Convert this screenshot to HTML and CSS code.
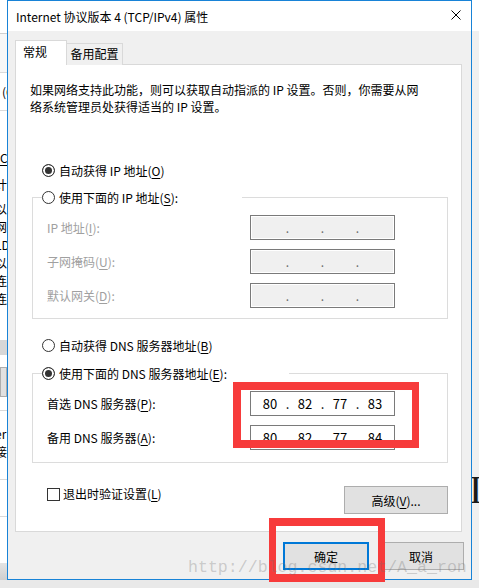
FILE: index.html
```html
<!DOCTYPE html>
<html lang="zh-CN">
<head>
  <meta charset="UTF-8">
  <title>Internet 协议版本 4 (TCP/IPv4) 属性</title>
  <link rel="stylesheet" href="styles.css">
</head>
<body>
  <div class="screen">
    <div class="desktop">
      <!-- window behind, left edge -->
      <div class="behind-left">
        <div class="bl-top"></div>
        <div class="bl-band"></div>
        <div class="bl-cell">(C</div>
        <div class="bl-list">
          <div class="bl-line"><u>C</u></div>
          <div class="bl-line bl-gap">计</div>
          <div class="bl-lines">
            <div>以</div><div>网</div><div>LD</div><div>以</div><div>连</div><div>连</div>
          </div>
        </div>
        <div class="bl-btn"></div>
        <div class="bl-btn2"></div>
        <div class="bl-rows">
          <div>er</div>
          <div>接</div>
        </div>
        <div class="bl-row"></div>
        <div class="bl-fill"></div>
        <div class="bl-shadow"></div>
      </div>

      <div class="dialog">
        <div class="titlebar">
          <span class="title">Internet 协议版本 4 (TCP/IPv4) 属性</span>
          <svg class="close" viewBox="0 0 10 10" width="10" height="10">
            <path d="M0.5 0.5 L9.5 9.5 M9.5 0.5 L0.5 9.5" stroke="#000" stroke-width="1" fill="none"/>
          </svg>
        </div>

        <div class="dialog-body">
          <div class="tabs">
            <div class="tab active">常规</div>
            <div class="tab">备用配置</div>
          </div>

          <div class="panel">
            <p class="desc">如果网络支持此功能，则可以获取自动指派的 IP 设置。否则，你需要从网<br>络系统管理员处获得适当的 IP 设置。</p>

            <label class="radio-row top-radio"><span class="radio checked"></span>自动获得 IP 地址(<u>O</u>)</label>

            <fieldset class="group ip-group">
              <legend class="legend-ip">
                <label class="radio-row"><span class="radio"></span>使用下面的 IP 地址(<u>S</u>):</label>
              </legend>
              <div class="field-row disabled">
                <span class="field-label">IP 地址(<u>I</u>):</span>
                <div class="ip-box">
                  <span class="octet"></span><span class="dot">.</span><span class="octet"></span><span class="dot">.</span><span class="octet"></span><span class="dot">.</span><span class="octet"></span>
                </div>
              </div>
              <div class="field-row disabled">
                <span class="field-label">子网掩码(<u>U</u>):</span>
                <div class="ip-box">
                  <span class="octet"></span><span class="dot">.</span><span class="octet"></span><span class="dot">.</span><span class="octet"></span><span class="dot">.</span><span class="octet"></span>
                </div>
              </div>
              <div class="field-row disabled">
                <span class="field-label">默认网关(<u>D</u>):</span>
                <div class="ip-box">
                  <span class="octet"></span><span class="dot">.</span><span class="octet"></span><span class="dot">.</span><span class="octet"></span><span class="dot">.</span><span class="octet"></span>
                </div>
              </div>
            </fieldset>

            <label class="radio-row dns-radio"><span class="radio"></span>自动获得 DNS 服务器地址(<u>B</u>)</label>

            <fieldset class="group dns-group">
              <legend class="legend-dns">
                <label class="radio-row"><span class="radio checked"></span>使用下面的 DNS 服务器地址(<u>E</u>):</label>
              </legend>
              <div class="field-row">
                <span class="field-label">首选 DNS 服务器(<u>P</u>):</span>
                <div class="ip-box">
                  <span class="octet">80</span><span class="dot">.</span><span class="octet">82</span><span class="dot">.</span><span class="octet">77</span><span class="dot">.</span><span class="octet">83</span>
                </div>
              </div>
              <div class="field-row">
                <span class="field-label">备用 DNS 服务器(<u>A</u>):</span>
                <div class="ip-box">
                  <span class="octet">80</span><span class="dot">.</span><span class="octet">82</span><span class="dot">.</span><span class="octet">77</span><span class="dot">.</span><span class="octet">84</span>
                </div>
              </div>
            </fieldset>

            <div class="panel-bottom">
              <label class="check-row"><span class="checkbox"></span>退出时验证设置(<u>L</u>)</label>
              <button class="btn btn-adv">高级(<u>V</u>)...</button>
            </div>
          </div>

          <div class="buttons">
            <button class="btn btn-default">确定</button>
            <button class="btn">取消</button>
          </div>
        </div>
      </div>

      <!-- window behind, right edge -->
      <div class="behind-right">
        <div class="br-top"></div>
        <div class="br-glyph">I</div>
      </div>
    </div>
    <div class="shadow"></div>
  </div>

  <div class="mark mark-dns"></div>
  <div class="mark mark-ok"></div>
  <div class="watermark">http://blog.csdn.net/A_a_ron</div>
</body>
</html>
```

FILE: styles.css
```css
* {
  box-sizing: border-box;
}

body {
  margin: 0;
  width: 479px;
  height: 588px;
  overflow: hidden;
  position: relative;
  background-color: #ebebeb;
  color: #000;
  font-family: "Noto Sans CJK SC", "Noto Sans", sans-serif;
  font-size: 12px;
}

u {
  text-decoration-thickness: 1px;
  text-underline-offset: 2px;
}

.screen {
  display: flex;
  flex-direction: column;
  height: 588px;
}

.desktop {
  display: flex;
  height: 580px;
}

.shadow {
  height: 8px;
  background-color: #e9e9e9;
}

/* window behind the dialog */
.behind-left {
  width: 7px;
  flex: none;
  overflow: hidden;
  background-color: #fff;
  display: flex;
  flex-direction: column;
  white-space: nowrap;
}

.bl-top {
  height: 34px;
  border-bottom: 1px solid #cfcfcf;
}

.bl-band {
  height: 39px;
  background-color: #f7f7f7;
  border-bottom: 1px solid #dadada;
}

.bl-cell {
  height: 38px;
  line-height: 37px;
  text-indent: 2px;
  border-bottom: 1px solid #dadada;
}

.bl-list {
  padding-top: 38px;
}

.bl-line {
  line-height: 17px;
}

.bl-gap {
  margin-top: 10px;
  line-height: 18px;
  text-indent: -5px;
}

.bl-lines {
  margin-top: 6px;
}

.bl-lines div {
  line-height: 18px;
  text-indent: -5px;
}

.bl-btn {
  margin-top: 32px;
  height: 15px;
  background-color: #d7d7d7;
}

.bl-btn2 {
  margin-top: 12px;
  height: 30px;
  background-color: #e1e1e1;
  border: 1px solid #adadad;
}

.bl-rows {
  margin-top: 13px;
  padding-top: 14px;
  height: 70px;
  border-top: 1px solid #d9d9d9;
  border-bottom: 1px solid #d9d9d9;
}

.bl-rows div {
  line-height: 18px;
  text-indent: -5px;
}

.bl-row {
  height: 37px;
  border-bottom: 1px solid #d9d9d9;
}

.bl-fill {
  flex: 1;
}

.bl-shadow {
  height: 17px;
  background: linear-gradient(#e4e4e4, #cfcfcf);
}

.behind-right {
  width: 7px;
  flex: none;
  overflow: hidden;
  background-color: #f0f0f0;
  white-space: nowrap;
}

.br-top {
  height: 31px;
  background-color: #fff;
}

.br-glyph {
  margin-top: 439px;
  font-family: "Liberation Serif", serif;
  font-size: 40px;
  line-height: 40px;
  text-indent: -3px;
  color: #1a1a1a;
}

/* dialog */
.dialog {
  width: 465px;
  flex: none;
  display: flex;
  flex-direction: column;
  border: 1px solid #1883d7;
  background-color: #f0f0f0;
}

.titlebar {
  height: 30px;
  flex: none;
  background-color: #fff;
  display: flex;
  justify-content: space-between;
  align-items: flex-start;
  padding: 0 10px 0 8px;
}

.title {
  line-height: 31px;
}

.close {
  margin-top: 9px;
}

.dialog-body {
  flex: 1;
  padding: 9px 7px 0 7px;
}

.tabs {
  display: flex;
  align-items: flex-end;
  height: 25px;
  margin-bottom: -1px;
}

.tab {
  height: 22px;
  width: 56px;
  border: 1px solid #d9d9d9;
  border-left: none;
  border-bottom: none;
  background-color: #f0f0f0;
  line-height: 19px;
  padding-bottom: 2px;
  text-align: center;
}

.tab.active {
  position: relative;
  z-index: 1;
  height: 25px;
  width: 52px;
  border-left: 1px solid #d9d9d9;
  background-color: #fff;
  line-height: 22px;
  padding: 0 0 2px 7px;
  text-align: left;
}

.panel {
  width: 447px;
  height: 468px;
  background-color: #fff;
  border: 1px solid #d9d9d9;
}

.desc {
  margin: 0;
  padding: 16px 0 0 14px;
  line-height: 17px;
}

.radio-row {
  display: flex;
  align-items: center;
  height: 17px;
  line-height: 17px;
  white-space: nowrap;
}

.top-radio {
  margin-top: 47px;
  padding-left: 26px;
}

.dns-radio {
  margin-top: 18px;
  padding-left: 26px;
}

.radio {
  width: 13px;
  height: 13px;
  flex: none;
  margin-right: 4px;
  border: 1px solid #333;
  border-radius: 50%;
  background-color: #fff;
}

.radio.checked {
  background-color: #333;
  box-shadow: inset 0 0 0 2px #fff;
}

.group {
  width: 416px;
  margin: 10px 0 0 16px;
  padding: 9px 0 10px 9px;
  border: 1px solid #dcdcdc;
  min-inline-size: 0;
}

.dns-group {
  margin-top: 11px;
  padding-bottom: 12px;
}

.group legend {
  padding: 0;
  height: 17px;
  background-color: #fff;
}

.legend-ip {
  width: 200px;
}

.legend-dns {
  width: 247px;
}

.field-row {
  display: flex;
  align-items: center;
  height: 25px;
  padding-left: 5px;
}

.field-row + .field-row {
  margin-top: 9px;
}

.field-label {
  width: 203px;
  flex: none;
  white-space: nowrap;
}

.disabled .field-label {
  color: #a0a0a0;
}

.ip-box {
  width: 145px;
  height: 25px;
  display: flex;
  align-items: center;
  padding-left: 5px;
  border: 1px solid #7a7a7a;
  background-color: #fff;
  font-size: 13px;
}

.disabled .ip-box {
  background-color: #f0f0f0;
  box-shadow: inset 0 0 0 1px #fff;
  color: #6d6d6d;
  font-size: 12px;
}

.octet {
  width: 28px;
  text-align: center;
}

.dot {
  width: 7px;
  text-align: center;
}

.panel-bottom {
  margin-top: 23px;
  display: flex;
  justify-content: space-between;
  align-items: flex-start;
  padding: 0 13px 0 31px;
}

.check-row {
  display: flex;
  align-items: center;
  height: 16px;
  line-height: 16px;
}

.checkbox {
  width: 13px;
  height: 13px;
  margin-right: 3px;
  border: 1px solid #333;
  background-color: #fff;
}

.btn {
  height: 28px;
  width: 86px;
  padding: 0;
  border: 1px solid #adadad;
  background-color: #e1e1e1;
  color: #000;
  font-family: inherit;
  font-size: 12px;
}

.btn-adv {
  width: 104px;
}

.btn-default {
  border: 2px solid #0078d7;
}

.buttons {
  margin-top: 10px;
  display: flex;
  justify-content: flex-end;
  gap: 9px;
}

/* annotations drawn over the screenshot */
.mark {
  position: absolute;
  border: 8px solid #f73b3b;
}

.mark-dns {
  left: 233px;
  top: 382px;
  width: 186px;
  height: 66px;
  border-right-width: 7px;
}

.mark-ok {
  left: 269px;
  top: 518px;
  width: 116px;
  height: 64px;
  border-left-width: 7px;
  border-right-width: 7px;
}

.watermark {
  position: absolute;
  left: 188px;
  top: 557px;
  font-family: "Liberation Mono", monospace;
  font-size: 16.6px;
  line-height: 22px;
  color: rgba(110, 110, 110, 0.3);
  white-space: nowrap;
}
```
